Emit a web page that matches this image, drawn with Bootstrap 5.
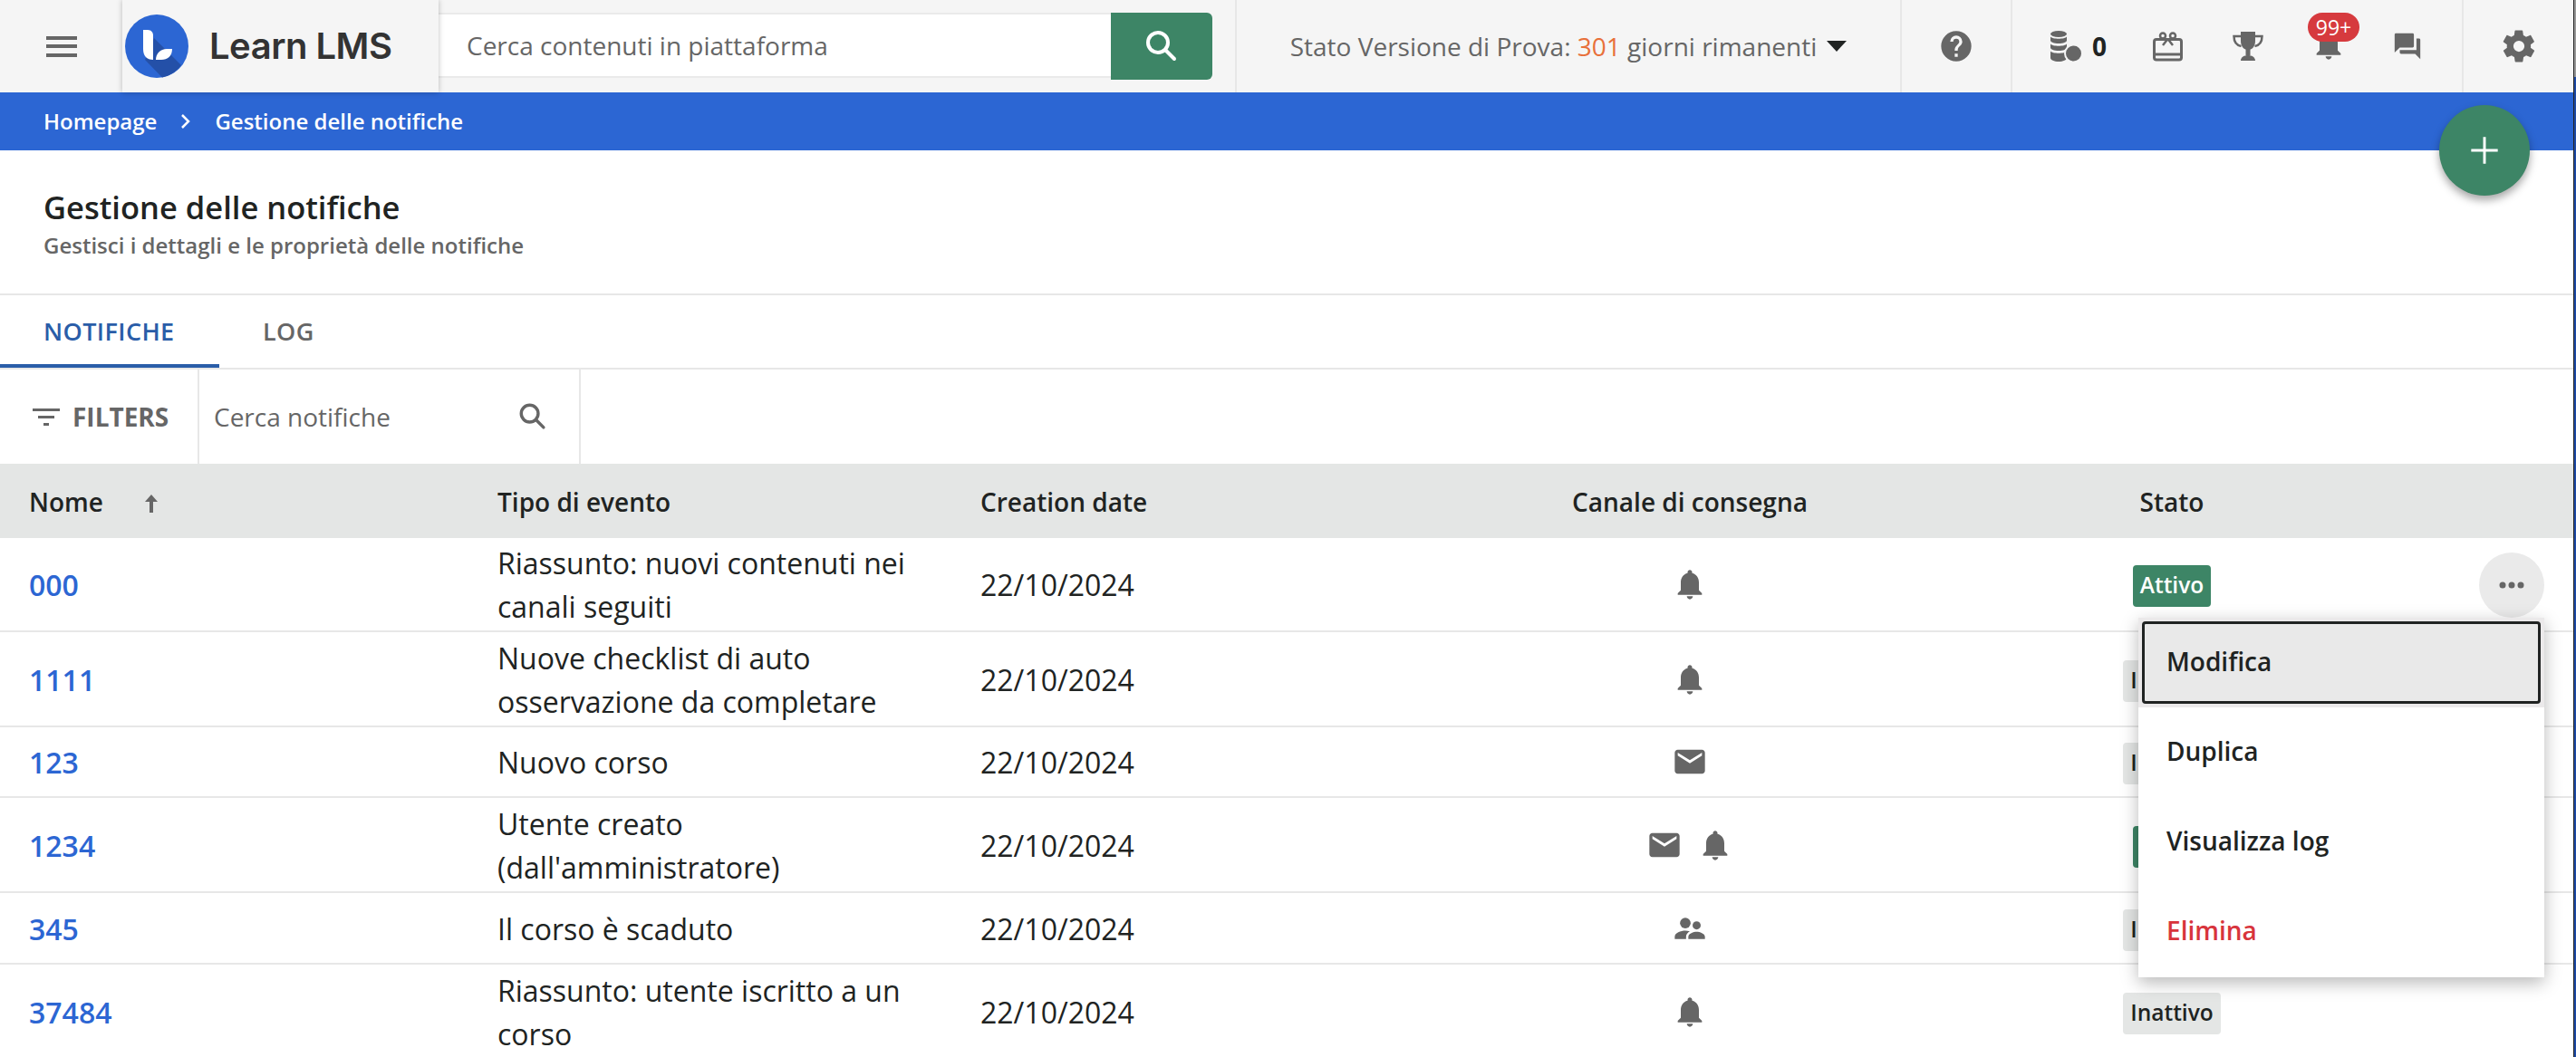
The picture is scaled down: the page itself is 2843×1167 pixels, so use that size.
<!DOCTYPE html>
<html lang="it">
<head>
<meta charset="utf-8">
<title>Gestione delle notifiche</title>
<link href="https://cdn.jsdelivr.net/npm/bootstrap@5.3.0/dist/css/bootstrap.min.css" rel="stylesheet">
<style>
html,body{height:100%;overflow:hidden}
body{font-family:"Open Sans","Noto Sans",sans-serif;font-size:32px;color:#202322;padding-right:3px;background:linear-gradient(#222,#222) no-repeat calc(100% - 2px) 0/1px 100%,linear-gradient(#999 85px,#1e4aa5 85px) no-repeat 100% 0/2px 100%,#fff}
svg{display:block;fill:#666}
.topbar{height:102px;background:#f5f5f5}
.burger{width:135px;gap:5.5px}
.burger i{display:block;width:34px;height:4px;background:#666;margin:0}
.brandbox{width:349px;height:102px;box-shadow:0 0 6px rgba(0,0,0,.25);position:relative;padding-left:3px}
.brandname{font-family:Inter,sans-serif;font-size:40px;font-weight:600;color:#333;margin-left:23px;letter-spacing:-.5px}
.searchwrap{width:854px;padding:14px 0}
.searchinput{flex:1;background:#fff;border-top:2px solid #eaeaea;border-bottom:2px solid #eaeaea;color:#666;font-size:28px;padding-left:31px;height:72px}
.searchbtn{width:112px;background:#3d8566;border-radius:0 6px 6px 0}
.trial{width:734px;border-left:2px solid #e7e7e7;color:#666;font-size:28px;margin-left:25px}
.trial b{font-weight:400;color:#e8703a}
.caret-down{width:0;height:0;border-left:11px solid transparent;border-right:11px solid transparent;border-top:12px solid #202322;margin-left:11px}
.helpcell{width:122px;border-left:2px solid #e7e7e7}
.toolcell{width:498px;border-left:2px solid #e7e7e7;padding-left:42px;position:relative}
.gearcell{flex:1;border-left:2px solid #e7e7e7}
.credit{font-size:28px;font-weight:700;margin:0 0 0 12px;color:#202322}
.tool-gift{margin-left:51px}
.tool-cup{margin-left:55px}
.tool-bell{margin:0 0 5px 52px}
.tool-chat{margin-left:50px}
.notifbadge{position:absolute;left:326px;top:14px;width:57px;height:32px;border-radius:16px;background:#d63a3e;color:#fff;font-size:23px;line-height:32px;text-align:center}
.crumbs{height:64px;background:#2c66d3;color:#fff;font-size:24px;font-weight:600;padding-left:48px}
.crumbs svg{fill:none;stroke:#fff;stroke-width:2.500;margin:0 26px 0 26px}
.fab{position:absolute;left:2692px;top:116px;width:100px;height:100px;border-radius:50%;background:#3d8566;box-shadow:0 5px 10px rgba(0,0,0,.35)}
.fab svg{fill:#fff}
.pagehead{height:160px;padding:37px 48px 0;border-bottom:2px solid #e7e7e7}
.pagetitle{font-size:34.500px;font-weight:600;line-height:51px;color:#202322;margin:0}
.pagesub{font-size:24px;font-weight:600;color:#666;line-height:34px}
.tabsrow{height:82px;border-bottom:2px solid #e7e7e7}
.tabitem{height:80px;font-size:27px;font-weight:600;color:#666;letter-spacing:.4px}
.tabitem.on{width:242px;padding:4px 0 0 48px;color:#2a5da8;border-bottom:4px solid #2a5da8}
.tabitem.second{padding-left:48px}
.filterrow{height:104px}
.filterbtn{width:220px;padding-left:36px;border-right:2px solid #e7e7e7;color:#666;font-weight:700;font-size:28px}
.filterbtn svg{margin-right:14px}
.filtersearch{width:421px;padding:0 34px 0 16px;border-right:2px solid #e7e7e7;color:#666;font-size:28px}
.lens-gray{color:#666}
.grid-t{table-layout:fixed;width:100%;border-collapse:collapse}
.grid-t th{background:#e4e6e5;height:82px;font-size:28px;font-weight:600;vertical-align:middle;padding:2px 0 0}
.grid-t td{padding:0;border-bottom:2px solid #e7e7e7;vertical-align:middle;line-height:48px;font-size:32px}
.grid-t td:nth-child(-n+3){padding-top:2px}
.grid-t td:nth-child(1),.grid-t th:nth-child(1){padding-left:32px}
.grid-t a{color:#2c66d3;text-decoration:none;font-weight:600;font-size:32px}
.r2a{height:103px}.r2{height:105px}.r1{height:78px}.r1b{height:79px}
.sortarrow{margin-left:46px;display:inline-block;vertical-align:-1px}
.stat{display:inline-block;font-size:24.500px;font-weight:600;line-height:44px;height:46px;padding:0 8px;border-radius:4px;background:#e4e6e5;color:#202322;vertical-align:middle}
.stat.act{background:#3d8566;color:#fff}
.chans{gap:16px}
.kebab{position:absolute;left:2736px;top:610px;width:72px;height:72px;border-radius:50%;background:#eaeaea}
.popmenu{position:absolute;left:2360px;top:682px;width:448px;height:397px;background:#fff;box-shadow:0 6px 18px rgba(0,0,0,.28);font-size:28px;font-weight:600}
.popitem{height:99px;padding:0 0 3px 31px;color:#202322}
.popitem.sel{background:#ebe9ea;padding:4px}
.popitem.sel span{display:flex;align-items:center;height:91px;width:100%;padding:0 0 3px 24px;border:3px solid #202322;border-radius:4px;background:#e9e9e9}
.popitem.del{color:#d8343c}
</style>
</head>
<body class="position-relative">
<svg width="0" height="0" class="position-absolute">
<defs>
<symbol id="bell" viewBox="0 0 24 24"><path d="M12 22c1.100 0 2-.9 2-2h-4c0 1.100.9 2 2 2zm6-6v-5c0-3.100-1.600-5.600-4.500-6.300V4c0-.8-.7-1.500-1.500-1.500s-1.500.7-1.500 1.500v.7C7.600 5.400 6 7.900 6 11v5l-2 2v1h16v-1z"/></symbol>
<symbol id="mail" viewBox="0 0 24 24"><path d="M20 4H4c-1.100 0-2 .9-2 2v12c0 1.100.9 2 2 2h16c1.100 0 2-.9 2-2V6c0-1.100-.9-2-2-2zm0 4-8 5-8-5V6l8 5 8-5z"/></symbol>
<symbol id="ppl" viewBox="0 0 24 24"><circle cx="9" cy="8.500" r="3.500"/><circle cx="16.500" cy="10" r="2.700"/><path d="M2 19v-1.500C2 15 6 13.500 9 13.500c1 0 2 .2 3 .5-1.300.8-2.500 2-2.500 3.500V19zM11 19v-1.500c0-2 3.500-3.200 5.500-3.200s5.500 1.200 5.500 3.200V19z"/></symbol>
<symbol id="lens" viewBox="0 0 40 40"><circle cx="16" cy="16" r="11" fill="none" stroke="currentColor" stroke-width="4"/><path d="M24.500 24.500 34 34" fill="none" stroke="currentColor" stroke-width="4" stroke-linecap="round"/></symbol>
</defs>
</svg>

<header class="topbar d-flex">
  <div class="burger d-flex flex-column justify-content-center align-items-center"><i></i><i></i><i></i></div>
  <div class="brandbox d-flex align-items-center">
    <svg width="70" height="70" viewBox="0 0 70 70"><circle cx="35" cy="35" r="35" fill="#2c66d3"/><path d="M32 26 62 56A35 35 0 0 1 41 69.500L22 50z" fill="#2450a8"/><path d="M20 17h5c4 0 6 3 6 6v27c-7 0-11-4-11-12z" fill="#fff"/><path d="M34 50c0-7 5-12 12-12h6c0 8-5 12-12 12z" fill="#fff"/></svg>
    <span class="brandname">Learn LMS</span>
  </div>
  <div class="searchwrap d-flex">
    <div class="searchinput d-flex align-items-center">Cerca contenuti in piattaforma</div>
    <div class="searchbtn d-flex align-items-center justify-content-center text-white"><svg width="40" height="40"><use href="#lens"/></svg></div>
  </div>
  <div class="trial d-flex align-items-center justify-content-center"><span>Stato Versione di Prova: <b>301</b> giorni rimanenti</span><span class="caret-down"></span></div>
  <div class="helpcell d-flex align-items-center justify-content-center"><svg width="40" height="40" viewBox="0 0 24 24"><path d="M12 2a10 10 0 1 0 0 20 10 10 0 0 0 0-20zm1 17h-2v-2h2zm2.100-7.700-.9.900c-.7.700-1.200 1.300-1.200 2.800h-2v-.5c0-1.100.5-2.100 1.200-2.800l1.200-1.300c.4-.3.600-.8.600-1.400a2 2 0 0 0-4 0H8a4 4 0 0 1 8 0c0 .9-.4 1.700-.9 2.300z"/></svg></div>
  <div class="toolcell d-flex align-items-center">
    <svg width="34" height="34" viewBox="0 0 34 34"><ellipse cx="9" cy="3.500" rx="9" ry="3.500"/><path d="M0 6.500c2 3 16 3 18 0v4c0 2-4 3.500-9 3.500s-9-1.500-9-3.500zM0 14.500c2 3 16 3 18 0v4c0 2-4 3.500-9 3.500s-9-1.500-9-3.500zM0 22.500c2 3 16 3 18 0v7.500c0 2-4 4-9 4s-9-2-9-4z"/><circle cx="25.500" cy="25" r="10.500" fill="#f5f5f5"/><circle cx="25.500" cy="25" r="8.500"/></svg>
    <span class="credit">0</span>
    <svg class="tool-gift" width="33" height="33" viewBox="0 0 33 33" fill="none" stroke="#666"><rect x="1.500" y="8.500" width="30" height="22.500" rx="2.500" fill="none" stroke-width="3"/><path d="M1 25h31" stroke-width="3"/><circle cx="11" cy="4.500" r="3" fill="none" stroke-width="2.500"/><circle cx="22" cy="4.500" r="3" fill="none" stroke-width="2.500"/><path d="M16.500 8 11 15M16.500 8 22 15" fill="none" stroke-width="2.500"/></svg>
    <svg class="tool-cup" width="34" height="32" viewBox="0 0 34 32"><path d="M9 0h16v10c0 7-4 10-8 10s-8-3-8-10z"/><path d="M9 5H1.500c0 6 3 10 8 11M25 5h7.500c0 6-3 10-8 11" fill="none" stroke="#666" stroke-width="2.500"/><path d="M14.500 19h5v7h-5zM9 32c0-4 4-6 8-6s8 2 8 6z"/></svg>
    <svg class="tool-bell" width="40" height="40"><use href="#bell"/></svg>
    <svg class="tool-chat" width="34" height="34" viewBox="0 0 24 24"><path d="M21 6h-2v9H6v2c0 .55.45 1 1 1h11l4 4V7c0-.55-.45-1-1-1zm-4 6V3c0-.55-.45-1-1-1H3c-.55 0-1 .45-1 1v14l4-4h10c.55 0 1-.45 1-1z"/></svg>
    <span class="notifbadge">99+</span>
  </div>
  <div class="gearcell d-flex align-items-center justify-content-center"><svg width="42" height="42" viewBox="0 0 24 24"><path d="M19.400 13c0-.3.100-.6.100-1s0-.7-.1-1l2.100-1.600c.2-.2.200-.4.100-.6l-2-3.500c-.1-.2-.4-.3-.6-.2l-2.500 1c-.5-.4-1.100-.7-1.700-1L14.400 2.400c0-.2-.2-.4-.5-.4h-4c-.2 0-.5.200-.5.400L9 5.100c-.6.300-1.100.6-1.700 1l-2.500-1c-.2-.1-.5 0-.6.200l-2 3.500c-.1.200-.1.500.1.600L4.500 11c0 .3-.1.700-.1 1s0 .7.100 1l-2.100 1.600c-.2.200-.2.400-.1.600l2 3.500c.1.200.4.300.6.200l2.500-1c.5.400 1.100.7 1.700 1l.4 2.700c0 .2.200.4.500.4h4c.2 0 .5-.2.500-.4l.4-2.700c.6-.3 1.100-.6 1.700-1l2.500 1c.2.100.5 0 .6-.2l2-3.500c.1-.2.100-.5-.1-.6zM12 15.500a3.500 3.500 0 1 1 0-7 3.500 3.500 0 0 1 0 7z"/></svg></div>
</header>

<nav class="crumbs d-flex align-items-center"><span>Homepage</span><svg width="12" height="20" viewBox="0 0 12 20"><path d="M2 3l7 7-7 7"/></svg><span>Gestione delle notifiche</span></nav>
<div class="fab d-flex align-items-center justify-content-center"><svg width="44" height="44" viewBox="0 0 24 24"><path d="M11.200 4h1.600v7.200H20v1.600h-7.200V20h-1.600v-7.200H4v-1.600h7.200z"/></svg></div>

<section class="pagehead">
  <h1 class="pagetitle">Gestione delle notifiche</h1>
  <div class="pagesub">Gestisci i dettagli e le proprietà delle notifiche</div>
</section>

<div class="tabsrow d-flex">
  <div class="tabitem on d-flex align-items-center">NOTIFICHE</div>
  <div class="tabitem second d-flex align-items-center">LOG</div>
</div>

<div class="filterrow d-flex">
  <div class="filterbtn d-flex align-items-center"><svg width="30" height="19" viewBox="0 0 30 19"><path d="M0 0h30v3H0zM6 8h18v3H6zM12 16h6v3h-6z"/></svg>FILTERS</div>
  <div class="filtersearch d-flex align-items-center justify-content-between"><span>Cerca notifiche</span><svg class="lens-gray" width="34" height="34"><use href="#lens"/></svg></div>
</div>

<table class="grid-t">
  <colgroup><col style="width:549px"><col style="width:533px"><col style="width:468px"><col style="width:630px"><col style="width:434px"><col></colgroup>
  <thead><tr>
    <th class="text-start">Nome<span class="sortarrow"><svg width="14" height="20" viewBox="0 0 14 20"><path d="M7 0l7 8H9v12H5V8H0z"/></svg></span></th>
    <th class="text-start">Tipo di evento</th>
    <th class="text-start">Creation date</th>
    <th class="text-center">Canale di consegna</th>
    <th class="text-center">Stato</th>
    <th></th>
  </tr></thead>
  <tbody>
    <tr class="r2a"><td><a href="#">000</a></td><td>Riassunto: nuovi contenuti nei<br>canali seguiti</td><td>22/10/2024</td><td><div class="d-flex justify-content-center"><svg width="40" height="40"><use href="#bell"/></svg></div></td><td class="text-center"><span class="stat act">Attivo</span></td><td></td></tr>
    <tr class="r2"><td><a href="#">1111</a></td><td>Nuove checklist di auto<br>osservazione da completare</td><td>22/10/2024</td><td><div class="d-flex justify-content-center"><svg width="40" height="40"><use href="#bell"/></svg></div></td><td class="text-center"><span class="stat">Inattivo</span></td><td></td></tr>
    <tr class="r1"><td><a href="#">123</a></td><td>Nuovo corso</td><td>22/10/2024</td><td><div class="d-flex justify-content-center"><svg width="40" height="40"><use href="#mail"/></svg></div></td><td class="text-center"><span class="stat">Inattivo</span></td><td></td></tr>
    <tr class="r2"><td><a href="#">1234</a></td><td>Utente creato<br>(dall'amministratore)</td><td>22/10/2024</td><td><div class="d-flex justify-content-center chans"><svg width="40" height="40"><use href="#mail"/></svg><svg width="40" height="40"><use href="#bell"/></svg></div></td><td class="text-center"><span class="stat act">Attivo</span></td><td></td></tr>
    <tr class="r1b"><td><a href="#">345</a></td><td>Il corso è scaduto</td><td>22/10/2024</td><td><div class="d-flex justify-content-center"><svg width="40" height="40"><use href="#ppl"/></svg></div></td><td class="text-center"><span class="stat">Inattivo</span></td><td></td></tr>
    <tr class="r2"><td><a href="#">37484</a></td><td>Riassunto: utente iscritto a un<br>corso</td><td>22/10/2024</td><td><div class="d-flex justify-content-center"><svg width="40" height="40"><use href="#bell"/></svg></div></td><td class="text-center"><span class="stat">Inattivo</span></td><td></td></tr>
  </tbody>
</table>

<div class="kebab d-flex align-items-center justify-content-center"><svg width="30" height="10" viewBox="0 0 30 10"><circle cx="5" cy="5" r="3.500"/><circle cx="15" cy="5" r="3.500"/><circle cx="25" cy="5" r="3.500"/></svg></div>
<div class="popmenu">
  <div class="popitem sel"><span>Modifica</span></div>
  <div class="popitem d-flex align-items-center">Duplica</div>
  <div class="popitem d-flex align-items-center">Visualizza log</div>
  <div class="popitem del d-flex align-items-center">Elimina</div>
</div>
<script src="https://cdn.jsdelivr.net/npm/bootstrap@5.3.0/dist/js/bootstrap.bundle.min.js"></script>
</body>
</html>
